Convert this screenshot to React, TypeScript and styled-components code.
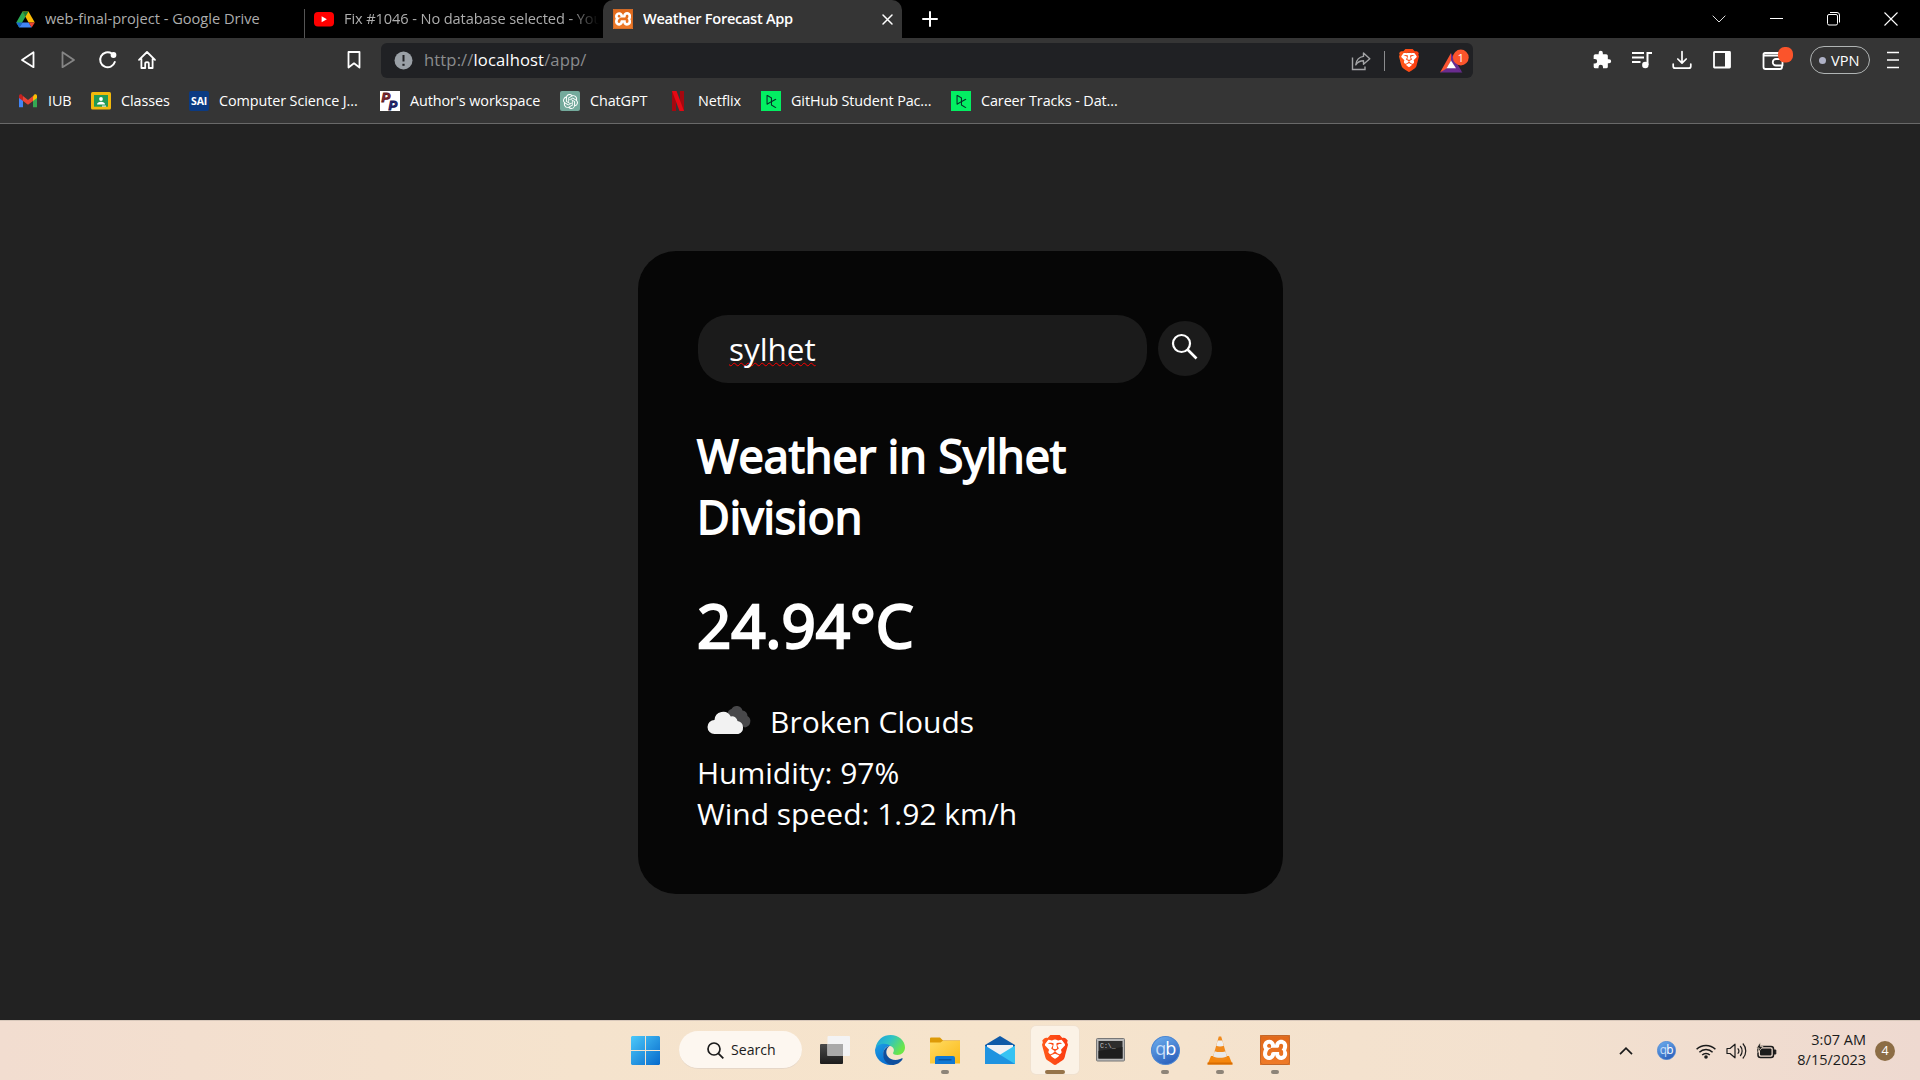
import React from 'react';
import styled, { createGlobalStyle } from 'styled-components';
import { SiBrave, SiXampp, SiOpenai, SiDatacamp } from 'react-icons/si';

const GlobalStyle = createGlobalStyle`
  * { box-sizing: border-box; }
  body { margin: 0; background: #222222; overflow: hidden; }
`;

const uiFont = `"Open Sans", "Noto Sans", sans-serif`;

const Screen = styled.div`
  width: 1920px;
  height: 1080px;
  display: flex;
  flex-direction: column;
  background: #222222;
  color: #fff;
  font-family: ${uiFont};
  svg { display: block; flex: none; }
`;

/* ---------- tab strip ---------- */
const TabStrip = styled.header`
  height: 38px;
  display: flex;
  align-items: stretch;
  background: #000;
`;

const Tab = styled.div<{ $width: number; $active?: boolean; $pad: number }>`
  width: ${p => p.$width}px;
  padding-left: ${p => p.$pad}px;
  display: flex;
  align-items: center;
  background: ${p => (p.$active ? '#353535' : 'transparent')};
  border-radius: 10px 10px 0 0;
`;

const TabTitle = styled.span<{ $strong?: boolean; $track: number; $fade?: boolean; $gap: number; $width: number }>`
  width: ${p => p.$width}px;
  margin-left: ${p => p.$gap}px;
  overflow: hidden;
  white-space: nowrap;
  font-size: 14.6px;
  line-height: 20px;
  padding-bottom: 3px;
  font-weight: ${p => (p.$strong ? 600 : 400)};
  letter-spacing: ${p => p.$track}px;
  color: ${p => (p.$strong ? '#fff' : '#adadad')};
  ${p => p.$fade && 'mask-image: linear-gradient(90deg, #000 88%, transparent 100%);'}
`;

const TabDivider = styled.div`
  width: 1px;
  height: 29px;
  align-self: flex-end;
  background: #555;
`;

const StripTools = styled.div`
  flex: 1;
  display: flex;
  align-items: center;
  padding: 0 22px 1px 20px;
`;

const WindowControls = styled.div`
  margin-left: auto;
  display: flex;
  align-items: center;
  gap: 44px;
`;

/* ---------- toolbar ---------- */
const Chrome = styled.div`
  height: 86px;
  background: #353535;
  border-bottom: 1px solid #696969;
`;

const Toolbar = styled.div`
  height: 45px;
  display: flex;
  align-items: center;
  padding: 0 21px 1px 18px;
`;

const Cell = styled.div<{ $width: number; $ml?: number }>`
  width: ${p => p.$width}px;
  margin-left: ${p => p.$ml ?? 0}px;
  display: flex;
  justify-content: center;
  align-items: center;
  flex: none;
`;

const AddressBar = styled.div`
  width: 1093px;
  height: 35px;
  margin: 1px 0 0 17px;
  padding: 0 4px 0 13px;
  display: flex;
  align-items: center;
  border-radius: 6px;
  background: #202124;
`;

const Url = styled.span`
  margin-left: 11px;
  padding-bottom: 1px;
  flex: 1;
  font-size: 16.6px;
  line-height: 24px;
  letter-spacing: 0.12px;
  color: #8b8c8e;
  b { font-weight: 400; color: #fff; }
`;

const Separator = styled.div`
  width: 1px;
  height: 20px;
  margin: 0 14px 0 13px;
  background: #8b8c8e;
`;

const VpnPill = styled.div`
  width: 60px;
  height: 28px;
  margin-left: 16px;
  display: flex;
  align-items: center;
  padding-left: 8px;
  gap: 5px;
  border: 1px solid #b0b4b4;
  border-radius: 14px;
  font-size: 14.6px;
  line-height: 18px;
  &::before {
    content: '';
    width: 7px;
    height: 7px;
    border-radius: 50%;
    background: #aeb1c6;
  }
`;

const Bookmarks = styled.nav`
  height: 36px;
  display: flex;
  align-items: center;
  gap: 20px;
  padding-left: 18px;
`;

const Bookmark = styled.a`
  display: flex;
  align-items: center;
  gap: 10px;
`;

const BookmarkLabel = styled.span<{ $width: number }>`
  width: ${p => p.$width}px;
  white-space: nowrap;
  font-size: 14.4px;
  line-height: 20px;
  padding-bottom: 1px;
  letter-spacing: -0.1px;
  color: #fff;
`;

const Tile = styled.div<{ $bg: string; $round?: number }>`
  width: 20px;
  height: 20px;
  display: flex;
  align-items: center;
  justify-content: center;
  background: ${p => p.$bg};
  font: 700 10.5px/20px ${uiFont};
  letter-spacing: -0.2px;
  border-radius: ${p => p.$round ?? 2}px;
`;

/* ---------- page ---------- */
const Page = styled.main`
  flex: 1;
  display: flex;
  justify-content: center;
  align-items: flex-start;
  padding-top: 127px;
  padding-left: 1px;
`;

const Card = styled.section`
  width: 645px;
  height: 643px;
  padding: 64px 59px 60px;
  display: flex;
  flex-direction: column;
  border-radius: 38px;
  background: #060606;
  font-size: 30px;
  line-height: 41px;
`;

const SearchRow = styled.div`
  display: flex;
  align-items: flex-start;
  height: 68px;
  padding-left: 1px;
`;

const SearchField = styled.div`
  width: 449px;
  height: 68px;
  padding: 0 31px;
  display: flex;
  align-items: center;
  border-radius: 30px;
  background: #1b1b1b;
  font-size: 31.4px;
  line-height: 42px;
`;

const Misspelled = styled.span`
  text-decoration: underline wavy #f00;
  text-decoration-thickness: 1.2px;
  text-decoration-skip-ink: none;
  text-underline-offset: 0.5px;
`;

const SearchButton = styled.button`
  width: 54px;
  height: 55px;
  margin: 6px 0 0 11px;
  padding: 0 1px 5px 0;
  border: 0;
  border-radius: 50%;
  display: flex;
  align-items: center;
  justify-content: center;
  background: #1b1b1b;
`;

const City = styled.h2`
  width: 449px;
  margin: 42px 0 0;
  font-size: 45px;
  line-height: 61px;
  font-weight: 400;
  -webkit-text-stroke: 1.8px #fff;
`;

const Temperature = styled.h1`
  margin: 37px 0 24px;
  font-size: 60px;
  line-height: 82px;
  font-weight: 400;
  -webkit-text-stroke: 2.4px #fff;
`;

const Condition = styled.div`
  height: 62px;
  display: flex;
  align-items: center;
  gap: 10px;
`;

/* ---------- taskbar ---------- */
const Taskbar = styled.footer`
  height: 60px;
  display: grid;
  grid-template-columns: 1fr 684px 1fr;
  border-top: 1px solid #d8c8bb;
  background: linear-gradient(90deg, #f2ddd0 0%, #f5e3cd 30%, #f6e4cc 52%, #f3e1cf 80%, #eed9d0 100%);
  color: #1b1b1b;
`;

const Apps = styled.div`
  grid-column: 2;
  display: flex;
  align-items: flex-start;
  padding-top: 5px;
`;

const AppButton = styled.div<{ $active?: boolean; $run?: boolean; $ml?: number }>`
  width: 48px;
  height: 48px;
  margin-left: ${p => p.$ml ?? 7}px;
  flex: none;
  display: grid;
  grid-template-rows: 36px 4px;
  align-content: start;
  justify-items: center;
  align-items: center;
  padding-top: 6px;
  border-radius: 5px;
  background: ${p => (p.$active ? '#fbf2e6' : 'transparent')};
  box-shadow: ${p => (p.$active ? '0 0 0 1px #f0e1cf' : 'none')};
  &::after {
    content: '';
    display: ${p => (p.$active || p.$run ? 'block' : 'none')};
    width: ${p => (p.$active ? 20 : 8)}px;
    height: 4px;
    margin-top: 4px;
    border-radius: 2px;
    background: ${p => (p.$active ? '#96744a' : '#8d8478')};
  }
`;

const TaskSearch = styled.div`
  width: 123px;
  height: 38px;
  margin: 5px 0 0 10px;
  padding: 1px 0 0 28px;
  display: flex;
  align-items: center;
  gap: 7px;
  border-radius: 19px;
  background: #fdf7f0;
  border-bottom: 1px solid #e6d7c8;
  font-size: 14.1px;
  line-height: 20px;
`;

const Tray = styled.div`
  display: flex;
  align-items: center;
  justify-content: flex-end;
  padding-right: 25px;
`;

const Clock = styled.div`
  width: 80px;
  margin-left: 9px;
  text-align: right;
  font-size: 14.5px;
  line-height: 20px;
  padding-bottom: 1px;
`;

const Notice = styled.div`
  width: 20px;
  height: 20px;
  margin-left: 9px;
  border-radius: 50%;
  background: #8c6d45;
  color: #fff;
  font-size: 12.5px;
  line-height: 19px;
  text-align: center;
`;

/* ---------- drawings ---------- */
const line = { fill: 'none', stroke: '#fff', strokeWidth: 1.8, strokeLinecap: 'round', strokeLinejoin: 'round' } as const;

const DriveIcon = () => (
  <svg width="19" height="17" viewBox="0 0 19 17">
    <path d="M6.5 .5 9.5 5.8 3.2 16.5 0.3 11.4z" fill="#2bab52" />
    <path d="M6.5.5h6l6.3 10.9h-6.2z" fill="#fbbc04" />
    <path d="M6.5.5 9.5 5.8 12.5.5z" fill="#188038" />
    <path d="M.3 11.4h6.2L3.2 16.5z" fill="#1967d2" />
    <path d="M6.5 11.4h6.1l3.1 5.1H3.2z" fill="#4285f4" />
    <path d="M12.6 11.4h6.2l-3.1 5.1z" fill="#ea4335" />
  </svg>
);

const YoutubeIcon = () => (
  <svg width="20" height="15" viewBox="0 0 20 15">
    <rect width="20" height="14.5" rx="4" fill="#f00" />
    <path d="M7.6 4.2v6l5.3-3z" fill="#fff" />
  </svg>
);

const XamppIcon = ({ size }: { size: number }) => (
  <svg width={size} height={size} viewBox="0 0 30 30">
    <defs>
      <linearGradient id="xam" x1="0" y1="0" x2="0" y2="1">
        <stop offset="0" stopColor="#d9803f" />
        <stop offset=".12" stopColor="#e2691a" />
        <stop offset="1" stopColor="#f07c2a" />
      </linearGradient>
    </defs>
    <rect x="3" y="3" width="24" height="24" fill="#fff" />
    <g>
      <SiXampp x={-1.6} y={-1.6} size={33.2} fill="url(#xam)" />
    </g>
    <rect x=".5" y=".5" width="29" height="29" rx="2.5" fill="none" stroke="#c2672a" />
  </svg>
);

const BraveIcon = ({ w, h }: { w: number; h: number }) => (
  <svg width={w} height={h} viewBox="1.8 0 20.4 24" preserveAspectRatio="none">
    <defs>
      <linearGradient id="brv" x1="0" y1="0" x2="1" y2="0">
        <stop offset="0" stopColor="#ff5a1a" />
        <stop offset="1" stopColor="#fb3a10" />
      </linearGradient>
    </defs>
    <path d="M6 4h12l3 4-4 9-5 3-5-3-4-9z" fill="#fff" />
    <SiBrave x={0} y={0} size={24} fill="url(#brv)" />
  </svg>
);

const BatIcon = () => (
  <svg width="29" height="26" viewBox="0 0 29 26">
    <path d="M11 5 22 24 15.500 20.500 11 13z" fill="#662d91" />
    <path d="M0 24.500 6 20h10.500l6 4.500z" fill="#6a2c8f" />
    <path d="M11 5 0 24.500l6.500-4L11 12.500z" fill="#fb5431" />
    <path d="M11 12.500 6.500 20.300h9.500z" fill="#fff" />
    <circle cx="20.800" cy="9.500" r="7.900" fill="#fb542b" />
    <text x="20.800" y="13.700" fontSize="11.500" textAnchor="middle" fill="#fff" fontFamily="Open Sans">1</text>
  </svg>
);

const GmailIcon = () => (
  <svg width="20" height="20" viewBox="0 0 20 20">
    <path d="M1 6v10.300h4V9z" fill="#4285f4" />
    <path d="M19 6v10.300h-4V9z" fill="#34a853" />
    <path d="M15 5.200V10l4-3V5c0-1.700-1.700-2.300-2.900-1.300z" fill="#fbbc04" />
    <path d="M1 5v2l4 3V5.200L3.900 3.700C2.700 2.700 1 3.300 1 5z" fill="#c5221f" />
    <path d="M5 10V5.100l5 3.800 5-3.800V10l-5 3.800z" fill="#ea4335" />
  </svg>
);

const ClassroomIcon = () => (
  <svg width="20" height="20" viewBox="0 0 20 20">
    <rect y="1" width="20" height="17.500" rx="1.500" fill="#f2b90c" />
    <rect x="3" y="4" width="14" height="11.700" fill="#219a55" />
    <circle cx="10" cy="8" r="1.900" fill="#fff" />
    <path d="M6 13.400c0-3.600 8-3.600 8 0z" fill="#fff" />
    <rect x="11" y="14.500" width="4" height="1.200" fill="#e8e8e8" />
  </svg>
);

const WorkspaceIcon = () => (
  <svg width="20" height="20" viewBox="0 0 20 20">
    <rect width="20" height="20" fill="#fff" />
    <text x="1.500" y="11" fontSize="13" fontWeight="700" fontStyle="italic" fontFamily="Liberation Sans" fill="#8a3038" stroke="#5b1620" strokeWidth=".9">P</text>
    <text x="8.500" y="18.800" fontSize="13" fontWeight="700" fontStyle="italic" fontFamily="Liberation Sans" fill="#2a2f86" stroke="#14144f" strokeWidth=".9">P</text>
  </svg>
);

const NetflixIcon = () => (
  <svg width="20" height="20" viewBox="0 0 20 20">
    <path d="M4 0h4v20H4zM12 0h4v20h-4z" fill="#a5070f" />
    <path d="M4 0h4.500L16 20h-4.500z" fill="#e50914" />
  </svg>
);

const WeatherIcon = () => (
  <svg width="63" height="62" viewBox="0 0 63 62">
    <path d="M30 24a5.500 5.500 0 0 1 4-5 6 6 0 0 1 11 1.500 5.500 5.500 0 0 1 5 5.500 6.300 6.300 0 0 1-2.500 11.500L36 32z" fill="#48484a" transform="translate(.5 0)" />
    <path d="M17.500 44a7 7 0 0 1 0-14 8.600 8.600 0 0 1 16.300-3.500A5.300 5.300 0 0 1 40.500 31a6.700 6.700 0 0 1 .8 13z" fill="#f2f2f2" />
  </svg>
);

const StartIcon = () => (
  <svg width="29" height="29" viewBox="0 0 29 29">
    <defs>
      <linearGradient id="win" x1="0" y1="0" x2="1" y2="1">
        <stop offset="0" stopColor="#4cc9fa" />
        <stop offset="1" stopColor="#0669cb" />
      </linearGradient>
    </defs>
    <path d="M1 0h13v14H0V1zM15 0h13l1 1v13H15zM0 15h14v14H1l-1-1zM15 15h14v13l-1 1H15z" fill="url(#win)" />
  </svg>
);

const TaskViewIcon = () => (
  <svg width="30" height="28" viewBox="0 0 30 28">
    <defs>
      <linearGradient id="tv" x1="0" y1="0" x2="0" y2="1">
        <stop offset="0" stopColor="#4a4a4a" />
        <stop offset="1" stopColor="#1c1c1c" />
      </linearGradient>
    </defs>
    <rect y="8" width="23" height="20" rx="1" fill="url(#tv)" />
    <rect x="7.500" y="0" width="22.500" height="20" rx="1" fill="#f3f3f4" />
    <rect x="7.500" y="8" width="15.500" height="12" fill="#a9a9a9" />
  </svg>
);

const EdgeIcon = () => (
  <svg width="30" height="30" viewBox="0 0 30 30">
    <defs>
      <linearGradient id="e1" x1="0" y1="0" x2="1" y2=".5">
        <stop offset="0" stopColor="#1b9de2" />
        <stop offset=".5" stopColor="#2fc3c4" />
        <stop offset="1" stopColor="#6ce647" />
      </linearGradient>
      <linearGradient id="e2" x1="0" y1="0" x2=".5" y2="1">
        <stop offset="0" stopColor="#1c9de4" />
        <stop offset="1" stopColor="#0a6fd0" />
      </linearGradient>
    </defs>
    <path d="M.5 13C2 4.500 8.500 0 15.500 0 24 0 30 6 30 12.500c0 4.500-3.500 7.500-7.500 7.500-3.500 0-5-1.200-4.300-2.500 1.300-2 1-5.500-3-6.500C10 9 4 9.500.5 13z" fill="url(#e1)" />
    <path d="M0 15C1 8.500 11 7 15.500 11c-4.500-.5-7 3.500-7 7.500 0 5.500 4 10.500 9.500 11.200-9 1.500-18-5-18-14.700z" fill="url(#e2)" />
    <path d="M12 14c-2.500 5.500 2 11 8.500 11 3 0 5.300-1.200 6.300-1.700.7-.3 1.100.3.700.9C25.500 27.500 21.500 30 17 30 11 29.300 8 24 8.200 18.700 8.300 15 11 11.500 14.500 11c-.7.500-1.800 1.500-2.500 3z" fill="#0e4f9e" />
  </svg>
);

const ExplorerIcon = () => (
  <svg width="30" height="27" viewBox="0 0 30 27">
    <defs>
      <linearGradient id="fd" x1="0" y1="0" x2="1" y2="1">
        <stop offset="0" stopColor="#ffdb62" />
        <stop offset="1" stopColor="#fbb917" />
      </linearGradient>
    </defs>
    <path d="M0 1.500Q0 .5 1 .5h9l3 3h17V10H0z" fill="#dd9a07" />
    <path d="M0 5.500h10.500l2-1.500H30v22.500H0z" fill="url(#fd)" />
    <path d="M5 27v-6q0-2 2-2h16q2 0 2 2v6z" fill="#0f78d4" />
    <path d="M8.500 22.800h13" stroke="#0b4f93" strokeWidth="1.200" />
  </svg>
);

const MailIcon = () => (
  <svg width="30" height="28" viewBox="0 0 30 28">
    <path d="M0 9 15 0l15 9v2H0z" fill="#0f5aa8" />
    <path d="M2 9h26v10H2z" fill="#f1f1f3" />
    <path d="M30 9.500 0 28h30z" fill="#36c3f3" />
    <path d="M0 9.500 30 28H0z" fill="#1f93e0" />
  </svg>
);

const TerminalIcon = () => (
  <svg width="29" height="24" viewBox="0 0 29 24">
    <rect x=".5" y=".5" width="28" height="22.500" rx="1" fill="#b9b9b9" stroke="#777" />
    <rect x="2.500" y="3" width="24" height="17.500" fill="#2d2d2d" />
    <path d="M2.500 13 26.500 9v11.500h-24z" fill="#1e1e1e" />
    <text x="4" y="10" fontSize="6.500" fill="#c9c9c9" fontFamily="Liberation Mono">C:\_</text>
  </svg>
);

const QbIcon = ({ size }: { size: number }) => (
  <svg width={size} height={size} viewBox="0 0 28 28">
    <defs>
      <linearGradient id="qb" x1="0" y1="0" x2=".5" y2="1">
        <stop offset="0" stopColor="#6fb0ef" />
        <stop offset="1" stopColor="#2f65bf" />
      </linearGradient>
    </defs>
    <circle cx="14" cy="14" r="13.500" fill="url(#qb)" stroke="#4b86d2" />
    <text x="4" y="18.500" fontSize="17.500" fill="#c5dcf7" fontFamily="Open Sans">q</text>
    <text x="13.800" y="18.500" fontSize="17.500" fill="#fff" fontFamily="Open Sans">b</text>
  </svg>
);

const VlcIcon = () => (
  <svg width="26" height="29" viewBox="0 0 26 29">
    <path d="M4 20h18l3.500 8.500H.5z" fill="#f5860b" />
    <path d="M.5 26.500h25v2H.5z" fill="#d96c00" />
    <path d="M11.800.5h2.400l6.300 22c-2 2.500-13 2.500-15 0z" fill="#f08a1d" />
    <path d="M10.700 4.500h4.600l1.500 5.200c-2 1-5.600 1-7.600 0z" fill="#efefef" />
    <path d="M7.600 15.200c3 1.200 7.800 1.200 10.800 0l1.500 5.200c-3.500 1.700-10.300 1.700-13.800 0z" fill="#e9e9e9" />
  </svg>
);

const dataCamp = <Tile $bg="#03ef62" $round={0}><SiDatacamp size={13} color="#06302a" /></Tile>;

const bookmarks: [React.ReactNode, string, number][] = [
  [<GmailIcon />, 'IUB', 23],
  [<ClassroomIcon />, 'Classes', 48],
  [<Tile $bg="#0b3a82">SAI</Tile>, 'Computer Science J...', 141],
  [<WorkspaceIcon />, "Author's workspace", 130],
  [<Tile $bg="#74aa9c"><SiOpenai size={15} color="#fff" /></Tile>, 'ChatGPT', 58],
  [<NetflixIcon />, 'Netflix', 43],
  [dataCamp, 'GitHub Student Pac...', 140],
  [dataCamp, 'Career Tracks - Dat...', 140],
];

export default function App() {
  return (
    <Screen>
      <GlobalStyle />
      <TabStrip>
        <Tab $width={304} $pad={16}>
          <DriveIcon />
          <TabTitle $gap={10} $track={0} $width={240}>web-final-project - Google Drive</TabTitle>
        </Tab>
        <TabDivider />
        <Tab $width={298} $pad={9}>
          <YoutubeIcon />
          <TabTitle $gap={10} $track={-0.1} $width={255} $fade>Fix #1046 - No database selected - You</TabTitle>
        </Tab>
        <Tab $width={299} $pad={10} $active>
          <XamppIcon size={20} />
          <TabTitle $gap={10} $track={-0.3} $width={238} $strong>Weather Forecast App</TabTitle>
          <svg width="13" height="13" viewBox="0 0 13 13"><path d="M2 2l9 9M11 2l-9 9" {...line} strokeWidth={1.5} /></svg>
        </Tab>
        <StripTools>
          <svg width="16" height="16" viewBox="0 0 16 16"><path d="M8 1v14M1 8h14" {...line} strokeWidth={2} /></svg>
          <WindowControls>
            <svg width="14" height="8" viewBox="0 0 14 8"><path d="M.7.700 7 7l6.300-6.300" fill="none" stroke="#ddd" /></svg>
            <svg width="13" height="2" viewBox="0 0 13 2"><path d="M0 .5h13" stroke="#fff" /></svg>
            <svg width="13" height="14" viewBox="0 0 13 14">
              <rect x=".5" y="2.500" width="10" height="10.500" rx="1.500" fill="none" stroke="#fff" />
              <path d="M3 .5h7q2.500 0 2.500 2.500v7.500" fill="none" stroke="#fff" />
            </svg>
            <svg width="14" height="14" viewBox="0 0 14 14"><path d="M.5.500l13 13M13.500.500l-13 13" stroke="#fff" strokeWidth="1.100" /></svg>
          </WindowControls>
        </StripTools>
      </TabStrip>

      <Chrome>
        <Toolbar>
          <Cell $width={20}><svg width="16" height="20" viewBox="0 0 16 20"><path d="M13.500 2.200v15L2 10z" {...line} /></svg></Cell>
          <Cell $width={20} $ml={20}><svg width="16" height="20" viewBox="0 0 16 20"><path d="M2.500 2.200v15L14 10z" {...line} stroke="#858585" /></svg></Cell>
          <Cell $width={20} $ml={20}>
            <svg width="20" height="20" viewBox="0 0 20 20">
              <path d="M13.800 3.500a7.500 7.500 0 1 0 3 8.500" {...line} strokeWidth={2} />
              <circle cx="15.500" cy="5" r="2.900" fill="#fff" />
            </svg>
          </Cell>
          <Cell $width={20} $ml={19}>
            <svg width="20" height="20" viewBox="0 0 20 20">
              <path d="M2 9.800 10 2l8 7.800M4.400 8.500V18h3.800v-4.300q0-1.500 1.800-1.500t1.800 1.500V18h3.800V8.500" {...line} />
            </svg>
          </Cell>
          <Cell $width={20} $ml={187}>
            <svg width="16" height="20" viewBox="0 0 16 20"><path d="M2.500 2h11v15.500L8 13.300l-5.500 4.200z" {...line} /></svg>
          </Cell>
          <AddressBar>
            <svg width="19" height="19" viewBox="0 0 19 19">
              <circle cx="9.500" cy="9.500" r="9" fill="#9aa0a6" />
              <path d="M9.500 4v6.500" stroke="#202124" strokeWidth="2" />
              <path d="M9.500 12.800v2" stroke="#202124" strokeWidth="2.200" />
            </svg>
            <Url>http://<b>localhost</b>/app/</Url>
            <svg width="20" height="20" viewBox="0 0 20 20">
              <path d="M1.500 6.500v12h12.500v-3" fill="none" stroke="#a3a4a6" strokeWidth="1.400" />
              <path d="M12.500 2l6.300 5.700-6.300 5.500v-3.400c-3.500 0-5.800 1.200-7.700 4C5.400 9.300 7.800 6 12.500 5.400z" fill="none" stroke="#a3a4a6" strokeWidth="1.400" strokeLinejoin="round" />
            </svg>
            <Separator />
            <BraveIcon w={20} h={23} />
            <Cell $width={29} $ml={21}><BatIcon /></Cell>
          </AddressBar>
          <Cell $width={20} $ml={119}>
            <svg width="20" height="20" viewBox="0 0 24 24">
              <path d="M20.500 11H19V7a2 2 0 0 0-2-2h-4V3.500a2.500 2.500 0 0 0-5 0V5H4a2 2 0 0 0-2 2v3.800h1.500a2.700 2.700 0 0 1 0 5.400H2V20a2 2 0 0 0 2 2h3.800v-1.500a2.700 2.700 0 0 1 5.400 0V22H17a2 2 0 0 0 2-2v-4h1.500a2.500 2.500 0 0 0 0-5z" fill="#fff" />
            </svg>
          </Cell>
          <Cell $width={20} $ml={20}>
            <svg width="20" height="18" viewBox="0 0 20 18">
              <path d="M0 2h12M0 6.500h12M0 11h8.500" stroke="#fff" strokeWidth="1.800" />
              <path d="M15.500 14V2H20" stroke="#fff" strokeWidth="2" fill="none" />
              <circle cx="13.300" cy="14" r="3.200" fill="#fff" />
            </svg>
          </Cell>
          <Cell $width={20} $ml={20}>
            <svg width="20" height="20" viewBox="0 0 20 20"><path d="M10 1.500v11.500M5.800 9l4.200 4.200L14.200 9M1.200 14v2.200q0 2 2 2h13.600q2 0 2-2V14" {...line} strokeWidth={1.700} /></svg>
          </Cell>
          <Cell $width={20} $ml={20}>
            <svg width="18" height="18" viewBox="0 0 18 18"><rect x="1" y="1" width="16" height="15.500" rx=".5" {...line} /><path d="M12 1h5v15.500h-5z" fill="#fff" /></svg>
          </Cell>
          <Cell $width={32} $ml={30}>
            <svg width="32" height="28" viewBox="0 0 32 28">
              <path d="M1.500 8.500q0-1.500 1.500-1.500h17.500v2.500M1.500 8v13q0 2 2 2h14.500q2 0 2-2v-1M1.500 9.500h16.500q2 0 2 2v1" {...line} />
              <path d="M20.500 13h-6.500a3.200 3.200 0 0 0 0 6.500h6.500z" {...line} />
              <rect x="16" y="1" width="15" height="15.500" rx="6.500" fill="#fb542b" />
            </svg>
          </Cell>
          <VpnPill>VPN</VpnPill>
          <Cell $width={12} $ml={17}>
            <svg width="12" height="18" viewBox="0 0 12 18"><path d="M0 1.500h12M0 9h12M0 16.500h12" stroke="#fff" strokeWidth="1.700" /></svg>
          </Cell>
        </Toolbar>
        <Bookmarks>
          {bookmarks.map(([icon, label, width]) => (
            <Bookmark key={label}>
              {icon}
              <BookmarkLabel $width={width}>{label}</BookmarkLabel>
            </Bookmark>
          ))}
        </Bookmarks>
      </Chrome>

      <Page>
        <Card>
          <SearchRow>
            <SearchField><Misspelled>sylhet</Misspelled></SearchField>
            <SearchButton aria-label="search">
              <svg width="27" height="27" viewBox="0 0 27 27">
                <circle cx="10.500" cy="10.500" r="8.500" fill="none" stroke="#fff" strokeWidth="2.200" />
                <path d="M16.500 16.500 25.500 25.500" stroke="#fff" strokeWidth="2.600" />
              </svg>
            </SearchButton>
          </SearchRow>
          <City>Weather in Sylhet Division</City>
          <Temperature>24.94°C</Temperature>
          <Condition><WeatherIcon />Broken Clouds</Condition>
          <div>Humidity: 97%</div>
          <div>Wind speed: 1.92 km/h</div>
        </Card>
      </Page>

      <Taskbar>
        <Apps>
          <AppButton $ml={3}><StartIcon /></AppButton>
          <TaskSearch>
            <svg width="17" height="17" viewBox="0 0 17 17">
              <circle cx="7" cy="7" r="6" fill="none" stroke="#1b1b1b" strokeWidth="1.700" />
              <path d="M11.300 11.300 16.300 16.300" stroke="#1b1b1b" strokeWidth="1.800" />
            </svg>
            Search
          </TaskSearch>
          <AppButton $ml={9}><TaskViewIcon /></AppButton>
          <AppButton><EdgeIcon /></AppButton>
          <AppButton $run><ExplorerIcon /></AppButton>
          <AppButton><MailIcon /></AppButton>
          <AppButton $active><BraveIcon w={26} h={30} /></AppButton>
          <AppButton><TerminalIcon /></AppButton>
          <AppButton $run><QbIcon size={29} /></AppButton>
          <AppButton $run><VlcIcon /></AppButton>
          <AppButton $run><XamppIcon size={30} /></AppButton>
        </Apps>
        <Tray>
          <svg width="14" height="8" viewBox="0 0 14 8"><path d="M1 7.200 7 1.200l6 6" fill="none" stroke="#1b1b1b" strokeWidth="1.700" /></svg>
          <Cell $width={20} $ml={23}><QbIcon size={19} /></Cell>
          <Cell $width={20} $ml={20}>
            <svg width="20" height="16" viewBox="0 0 20 16">
              <g fill="none" stroke="#1b1b1b" strokeWidth="1.500">
                <path d="M.6 6.300a13.300 13.300 0 0 1 18.800 0M3.400 9.200a9.300 9.300 0 0 1 13.200 0M6.200 12a5.300 5.300 0 0 1 7.600 0" />
              </g>
              <circle cx="10" cy="14" r="1.800" fill="#1b1b1b" />
            </svg>
          </Cell>
          <Cell $width={21} $ml={10}>
            <svg width="21" height="18" viewBox="0 0 21 18">
              <g fill="none" stroke="#1b1b1b" strokeWidth="1.200" strokeLinejoin="round">
                <path d="M1 6.500h3L9 2.200v13.600L4 11.500H1z" />
                <path d="M11.700 6.300a4 4 0 0 1 0 5.400M14.200 4a7.500 7.500 0 0 1 0 10M16.800 1.500a11 11 0 0 1 0 15" />
              </g>
            </svg>
          </Cell>
          <Cell $width={21} $ml={9}>
            <svg width="21" height="17" viewBox="0 0 21 17">
              <rect x="2" y="4.500" width="15.500" height="11" rx="2.500" fill="none" stroke="#1b1b1b" strokeWidth="1.500" />
              <rect x="4" y="6.500" width="11.500" height="7" rx="1" fill="#1b1b1b" />
              <path d="M18 8h1.800v4H18z" fill="#1b1b1b" stroke="#1b1b1b" />
              <path d="M4.500 0 .5 6h2.700L2 10.500 7 4.500H4.300z" fill="#1b1b1b" stroke="#f3e1cf" strokeWidth=".7" />
            </svg>
          </Cell>
          <Clock>3:07 AM<br />8/15/2023</Clock>
          <Notice>4</Notice>
        </Tray>
      </Taskbar>
    </Screen>
  );
}
